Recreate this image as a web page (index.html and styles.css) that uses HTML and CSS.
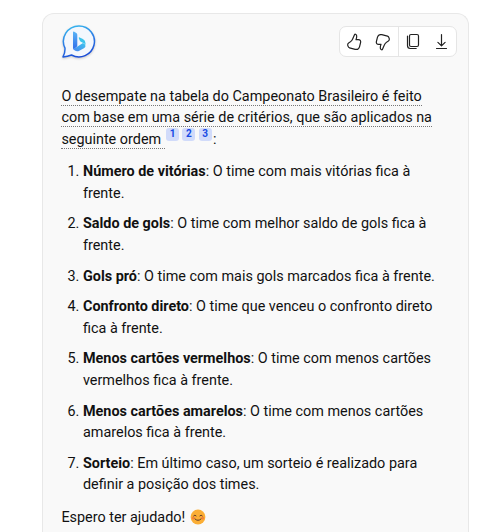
FILE: index.html
```html
<!DOCTYPE html>
<html lang="pt-BR">
<head>
<meta charset="utf-8">
<title>Critérios de desempate</title>
<link rel="stylesheet" href="styles.css">
</head>
<body>
<main class="card">
  <header class="top">
    <svg class="logo" width="36" height="36" viewBox="0 0 36 36">
      <defs>
        <linearGradient id="ring" x1="0.3" y1="0" x2="0.6" y2="1"><stop offset="0" stop-color="#36b5ee"/><stop offset=".5" stop-color="#2b7be6"/><stop offset="1" stop-color="#1a4bd6"/></linearGradient>
        <linearGradient id="stem" x1="0" y1="0" x2="0" y2="1"><stop offset="0" stop-color="#5ab4f5"/><stop offset="1" stop-color="#2f6cea"/></linearGradient>
        <linearGradient id="mark" x1="1" y1="0" x2="0" y2="1"><stop offset="0" stop-color="#3cc4ec"/><stop offset="1" stop-color="#4a86f3"/></linearGradient>
      </defs>
      <path d="M18 1.900a15.500 15.500 0 1 1-7.500 29.100q-4 1.700-8.500 1.900 2.200-4 2-8.700A15.500 15.500 0 0 1 18 1.900Z" fill="#f3f7fd" stroke="url(#ring)" stroke-width="1.500" stroke-linejoin="round"/>
      <path d="M12 8.500q0-1.500 1.300-.8l2 1.300q1 .7 1 1.800v11.400l-3.600 3.300q-.7-.6-.7-1.500Z" fill="url(#stem)"/>
      <path d="M17.800 14.200q-.4-1.200.9-.8l3.200 1.500q2.600 1.300 2.600 4.300v1.900q-.4-1.200-1.700-1.900l-2.500-1.200q-1-.4-1.400-1.300Z" fill="#3cc4ec"/>
      <path d="M12 23.500q.6 1.400 2.200.6l7.800-5q2.500 1 2.500 3 0 1.300-1.600 2.200l-4.600 2.400q-2.300 1.200-4.500-.2-1.800-1.200-1.800-3Z" fill="url(#mark)"/>
    </svg>
    <div class="tools">
      <svg class="icon" viewBox="0 0 20 20"><path d="M10.600 2.500c.4-.6 2.300-.2 2.100 2.100-.1 1.200-.4 2.200-.7 3h2.300c1.800 0 2.700 1.300 2.300 2.900l-1.100 4.300c-.6 2-2.200 3-4.300 2.500l-5.700-1.500c-.8-.2-1.300-.8-1.500-1.600l-.3-1.100c-.2-.9.1-1.600.9-2.100 3.600-2.100 3.800-3.100 6-8.500Z"/></svg>
      <svg class="icon flip" viewBox="0 0 20 20"><path d="M10.600 2.500c.4-.6 2.300-.2 2.100 2.100-.1 1.200-.4 2.200-.7 3h2.300c1.800 0 2.700 1.300 2.300 2.900l-1.100 4.300c-.6 2-2.200 3-4.300 2.500l-5.700-1.500c-.8-.2-1.300-.8-1.500-1.600l-.3-1.100c-.2-.9.1-1.600.9-2.100 3.600-2.100 3.800-3.100 6-8.500Z"/></svg>
      <span class="divider"></span>
      <svg class="icon" viewBox="0 0 20 20"><rect x="6.500" y="2.500" width="9" height="12" rx="1.500"/><path d="M4.500 4v9.500q0 3 2.700 3h6"/></svg>
      <svg class="icon" viewBox="0 0 20 20"><path d="M9.500 2.500v11M5.900 10.300l3.600 3.600 3.600-3.600M4.500 16.500h10"/></svg>
    </div>
  </header>
  <p class="intro"><span class="cited">O desempate na tabela do Campeonato Brasileiro é feito<br>com base em uma série de critérios, que são aplicados na<br>seguinte ordem </span><sup>1</sup><sup>2</sup><sup>3</sup><span class="colon">:</span></p>
  <ol>
    <li><b>Número de vitórias</b>: O time com mais vitórias fica à<br>frente.</li>
    <li><b>Saldo de gols</b>: O time com melhor saldo de gols fica à<br>frente.</li>
    <li><b>Gols pró</b>: O time com mais gols marcados fica à frente.</li>
    <li><b>Confronto direto</b>: O time que venceu o confronto direto<br>fica à frente.</li>
    <li><b>Menos cartões vermelhos</b>: O time com menos cartões<br>vermelhos fica à frente.</li>
    <li><b>Menos cartões amarelos</b>: O time com menos cartões<br>amarelos fica à frente.</li>
    <li><b>Sorteio</b>: Em último caso, um sorteio é realizado para<br>definir a posição dos times.</li>
  </ol>
  <p class="outro">Espero ter ajudado! <svg class="emoji" viewBox="0 0 16 16"><circle cx="8" cy="8" r="7.400" fill="#fbae35"/><circle cx="3.300" cy="9" r="1.500" fill="#f5823a"/><circle cx="12.700" cy="9" r="1.500" fill="#f5823a"/><path d="M3.700 6.800q1.200-1.500 2.400 0M9.900 6.800q1.200-1.500 2.400 0M5 10q3 2.800 6 0" fill="none" stroke="#5c3a2c" stroke-width="1" stroke-linecap="round"/></svg></p>
</main>
</body>
</html>
```

FILE: styles.css
```css
* { box-sizing: border-box; }
body {
  margin: 0;
  height: 532px;
  overflow: hidden;
  background: #fff;
  color: #111;
  font: 14.4px/21.600px Roboto, sans-serif;
}
.card {
  width: 427px;
  height: 519px;
  margin: 13px 0 0 42px;
  padding: 12px 11px 0 18.400px;
  overflow: hidden;
  border: 1px solid #e8e8e8;
  border-bottom: 0;
  border-radius: 12px 12px 0 0;
  background: #f9f9f9;
}
.top { display: flex; justify-content: space-between; height: 59.700px; }
.logo { margin-top: -2px; margin-left: -.4px; filter: drop-shadow(0 1px 1px rgba(0, 0, 0, .2)); }
.tools {
  display: flex;
  align-items: center;
  width: 118px;
  height: 31px;
  padding-left: 4px;
  border: 1px solid #e5e5e5;
  border-radius: 7px;
  background: #fff;
}
.icon { flex: none; width: 20px; height: 20px; margin-right: 9px; fill: none; stroke: #222; stroke-width: 1.200; stroke-linecap: round; stroke-linejoin: round; }
.icon.flip { margin-right: 5px; transform: rotate(180deg); }
.divider { flex: none; width: 1px; height: 29px; margin-right: 4px; background: #e5e5e5; }
p { margin: 0; white-space: nowrap; }
.cited { border-bottom: 1px dotted #777; }
sup {
  display: inline-block;
  width: 13px;
  height: 13px;
  margin-top: -4px;
  margin-right: 3.300px;
  border-radius: 3px;
  background: #d1dbfa;
  color: #174ae4;
  font-size: 10px;
  font-weight: 700;
  line-height: 12px;
  text-align: center;
  vertical-align: 6.500px;
}
.cited + sup { margin-left: 1.400px; }
sup:last-of-type { margin-right: 1.200px; }
ol { margin: 10.700px 0 0; padding-left: 21.600px; white-space: nowrap; }
li { margin-bottom: 9px; }
.outro { margin-top: 11px; }
.emoji { width: 16px; height: 16px; margin-left: 1px; vertical-align: -3px; }
```
